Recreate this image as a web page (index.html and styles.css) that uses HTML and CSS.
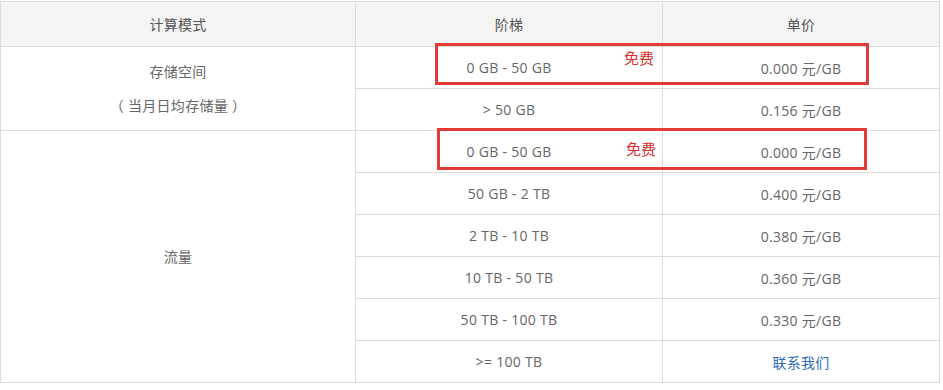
FILE: index.html
```html
<!DOCTYPE html>
<html lang="zh-CN">
<head>
<meta charset="utf-8">
<title>计费</title>
<link rel="stylesheet" href="styles.css">
</head>
<body>
<div class="wrap">
  <table class="price">
    <colgroup>
      <col class="c1"><col class="c2"><col class="c3">
    </colgroup>
    <thead>
      <tr><th>计算模式</th><th>阶梯</th><th>单价</th></tr>
    </thead>
    <tbody>
      <tr>
        <td rowspan="2" class="mode">存储空间<br>（ 当月日均存储量 ）</td>
        <td>0 GB - 50 GB</td><td>0.000 元/GB</td>
      </tr>
      <tr><td>&gt; 50 GB</td><td>0.156 元/GB</td></tr>
      <tr>
        <td rowspan="6" class="mode">流量</td>
        <td>0 GB - 50 GB</td><td>0.000 元/GB</td>
      </tr>
      <tr><td>50 GB - 2 TB</td><td>0.400 元/GB</td></tr>
      <tr><td>2 TB - 10 TB</td><td>0.380 元/GB</td></tr>
      <tr><td>10 TB - 50 TB</td><td>0.360 元/GB</td></tr>
      <tr><td>50 TB - 100 TB</td><td>0.330 元/GB</td></tr>
      <tr><td>&gt;= 100 TB</td><td><a class="link" href="#">联系我们</a></td></tr>
    </tbody>
  </table>
  <div class="mark mark1"><span class="free">免费</span></div>
  <div class="mark mark2"><span class="free">免费</span></div>
</div>
</body>
</html>
```
FILE: styles.css
```css
html, body {
  margin: 0;
  padding: 0;
  background: #fff;
}
body {
  font-family: "Open Sans", "Noto Sans CJK SC", sans-serif;
  font-size: 14px;
  color: #666;
  letter-spacing: 0.3px;
}
.wrap {
  position: relative;
  padding-top: 1px;
  width: 943px;
}
.price {
  border-collapse: collapse;
  width: 939px;
  table-layout: fixed;
}
.c1 { width: 355px; }
.c2 { width: 307px; }
.c3 { width: 277px; }
.price th,
.price td {
  border: 1px solid #dcdcdc;
  text-align: center;
  padding: 0;
  font-weight: normal;
}
.price th {
  background: #f4f4f4;
  height: 44px;
  color: #555;
}
.price td {
  height: 41px;
}
.price td.mode {
  line-height: 34px;
}
.link {
  color: #2b6cb5;
  text-decoration: none;
}
.mark {
  position: absolute;
  border: 3px solid #e53a3a;
  box-sizing: border-box;
}
.mark1 {
  left: 435px;
  top: 43px;
  width: 434px;
  height: 42px;
}
.mark2 {
  left: 437px;
  top: 128px;
  width: 430px;
  height: 42px;
}
.free {
  position: absolute;
  left: 186px;
  top: 2px;
  color: #d9302f;
  font-size: 15px;
  font-family: "Noto Sans CJK SC", sans-serif;
  line-height: 20px;
  letter-spacing: 0;
}
.mark2 .free { left: 186px; top: 8px; }
```
